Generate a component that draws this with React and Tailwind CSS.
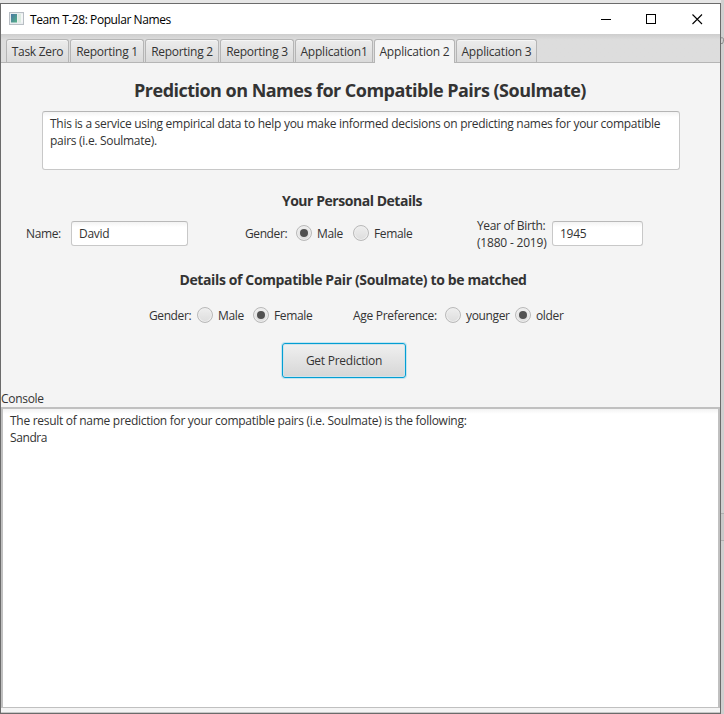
const tabs = [
  { label: 'Task Zero', w: 'w-[63px]' },
  { label: 'Reporting 1', w: 'w-[74px]' },
  { label: 'Reporting 2', w: 'w-[74px]' },
  { label: 'Reporting 3', w: 'w-[74px]' },
  { label: 'Application1', w: 'w-[78px]', spacing: 'tracking-[-0.2px]' },
  { label: 'Application 2', w: 'w-[81px]', spacing: 'tracking-[-0.2px]', active: true },
  { label: 'Application 3', w: 'w-[81px]', spacing: 'tracking-[-0.2px]' },
];

function Radio({ checked, label, className = '' }) {
  return (
    <div className={`flex items-center ${className}`}>
      <span className="flex size-4 shrink-0 items-center justify-center rounded-full border border-[#b9b9b9] bg-linear-to-b from-[#eeeeee] to-[#dddddd] inset-shadow-[0_0_0_1px_#eeeeee]">
        {checked && <span className="size-2 rounded-full bg-[#515151]" />}
      </span>
      <span className="ml-[5px] tracking-[-0.36px]">{label}</span>
    </div>
  );
}

function Field({ value, className }) {
  return (
    <div className={`flex h-[25px] items-center rounded-[3px] border border-[#c8c8c8] border-t-[#b9b9b9] bg-white bg-linear-to-b from-[#f3f3f3] to-white to-[5px] pl-[7px] ${className}`}>
      {value}
    </div>
  );
}

export default function App() {
  return (
    <div className="flex h-[714px] w-[724px] overflow-hidden whitespace-nowrap bg-[#d4d4d4] font-['Open_Sans',sans-serif] text-[12px] leading-[17px] tracking-[-0.29px] text-[#333333]">
      <div className="flex w-[721px] flex-col">
        <div className="h-[3px] bg-[#e6e6e6]" />
        <div className="flex h-[711px] flex-col border border-[#6b6b6b] bg-[#f4f4f4]">
          <header className="flex h-[30px] shrink-0 items-center bg-white text-black">
            <svg className="ml-2 h-[14px] w-4" viewBox="0 0 16 14">
              <defs>
                <linearGradient id="g" x1="0" y1="0" x2="1" y2="1">
                  <stop offset="0" stopColor="#4876a4" />
                  <stop offset="1" stopColor="#55b285" />
                </linearGradient>
              </defs>
              <rect x="0.5" y="0.5" width="14" height="12" fill="#e9edef" stroke="#b8bec4" />
              <rect x="2" y="2" width="6" height="8.5" fill="url(#g)" />
              <rect x="9" y="2" width="3" height="8.5" fill="#dcebe0" />
              <rect x="12.5" y="2" width="1" height="8.5" fill="#ffffff" />
            </svg>
            <span className="ml-[5px] tracking-[-0.42px]">Team T-28: Popular Names</span>
            <svg className="mr-[17px] ml-auto h-[11px] w-[102px]" viewBox="0 0 102 11" fill="none" stroke="#000">
              <path d="M0 5.5h10" />
              <rect x="45.5" y="0.5" width="9" height="9" />
              <path d="M91.5 0.5l9.5 9.5M101 0.5l-9.5 9.5" strokeWidth="1.1" />
            </svg>
          </header>

          <nav className="flex h-[29px] shrink-0 items-end gap-px border-b border-[#b5b5b5] bg-linear-to-b from-[#cdcdcd] to-[#dddddd] to-[6px] pl-[5px]">
            {tabs.map((t) => (
              <div
                key={t.label}
                className={`flex items-center justify-center rounded-t-[3px] border border-b-0 border-[#b5b5b5] ${t.w} ${t.spacing ?? ''} ${
                  t.active ? '-mb-px h-[24px] bg-[#f4f4f4] pb-px' : 'h-[23px] bg-linear-to-b from-[#ececec] to-[#dadada] inset-shadow-[0_1px_0_#f6f6f6]'
                }`}
              >
                {t.label}
              </div>
            ))}
          </nav>

          <main className="flex flex-col">
            <h1 className="mt-[15px] pr-px text-center text-[18px] leading-6 font-bold tracking-[-0.52px]">Prediction on Names for Compatible Pairs (Soulmate)</h1>
            <div className="mt-[9px] ml-[41px] h-[59px] w-[638px] rounded-[3px] border border-[#c8c8c8] border-t-[#b5b5b5] bg-white bg-linear-to-b from-[#f3f3f3] to-white to-[5px] pt-[3px] pl-[7px]">
              <p>This is a service using empirical data to help you make informed decisions on predicting names for your compatible</p>
              <p>pairs (i.e. Soulmate).</p>
            </div>

            <h2 className="mt-[21px] pr-[17px] text-center text-[14px] leading-5 font-bold tracking-[-0.46px]">Your Personal Details</h2>
            <div className="mt-[2px] flex h-10 items-center">
              <span className="ml-[25px] w-[45px] tracking-[-0.36px]">Name:</span>
              <Field value="David" className="w-[117px]" />
              <span className="ml-[57px] w-[51px] tracking-[-0.4px]">Gender:</span>
              <Radio label="Male" checked className="w-[57px]" />
              <Radio label="Female" className="w-[124px]" />
              <span className="w-[75px] pt-[2px] tracking-[-0.34px]">Year of Birth:<br /><span className="tracking-[-0.2px]">(1880 - 2019)</span></span>
              <Field value="1945" className="w-[91px]" />
            </div>

            <h2 className="mt-[17px] pr-[15px] text-center text-[14px] leading-5 font-bold tracking-[-0.37px]">Details of Compatible Pair (Soulmate) to be matched</h2>
            <div className="mt-[15px] flex h-5 items-center">
              <span className="ml-[148px] w-[48px] tracking-[-0.4px]">Gender:</span>
              <Radio label="Male" className="w-[56px]" />
              <Radio label="Female" checked className="w-[100px]" />
              <span className="w-[92px]">Age Preference:</span>
              <Radio label="younger" className="w-[70px]" />
              <Radio label="older" checked />
            </div>

            <button className="mt-[18px] ml-[281px] h-[35px] w-[124px] rounded-[3px] border border-[#039ed3] bg-linear-to-b from-[#f0f0f0] to-[#d6d6d6] tracking-[-0.25px] shadow-[0_0_0_1px_#c4e5f0] inset-shadow-[0_0_0_1px_#cfe3ea]">
              Get Prediction
            </button>

            <div className="mt-3 h-[17px]">Console</div>
            <div className="h-[301px] border-x-2 border-t-2 border-b border-[#c0c0c0] bg-white bg-linear-to-b from-[#f3f3f3] to-white to-[5px] pt-[3px] pl-[7px]">
              <p>The result of name prediction for your compatible pairs (i.e. Soulmate) is the following:</p>
              <p className="tracking-[-0.4px]">Sandra</p>
            </div>
            <div className="h-[5px] border-b border-[#c8c8c8] bg-[#f4f4f4]" />
          </main>
        </div>
      </div>
      <aside className="flex w-[3px] flex-col overflow-hidden bg-[#d0d0d0]">
        <svg className="mt-[37px] h-[9px] w-[3px] shrink-0" viewBox="0 0 3 9" fill="none" stroke="#8c8c8c">
          <path d="M0 .8h1.5q1 0 1 2t-1 3.7H0" />
        </svg>
        <div className="mt-[467px] h-[28px] border-y border-[#b0b0b0] bg-[#c9c9c9]" />
      </aside>
    </div>
  );
}
